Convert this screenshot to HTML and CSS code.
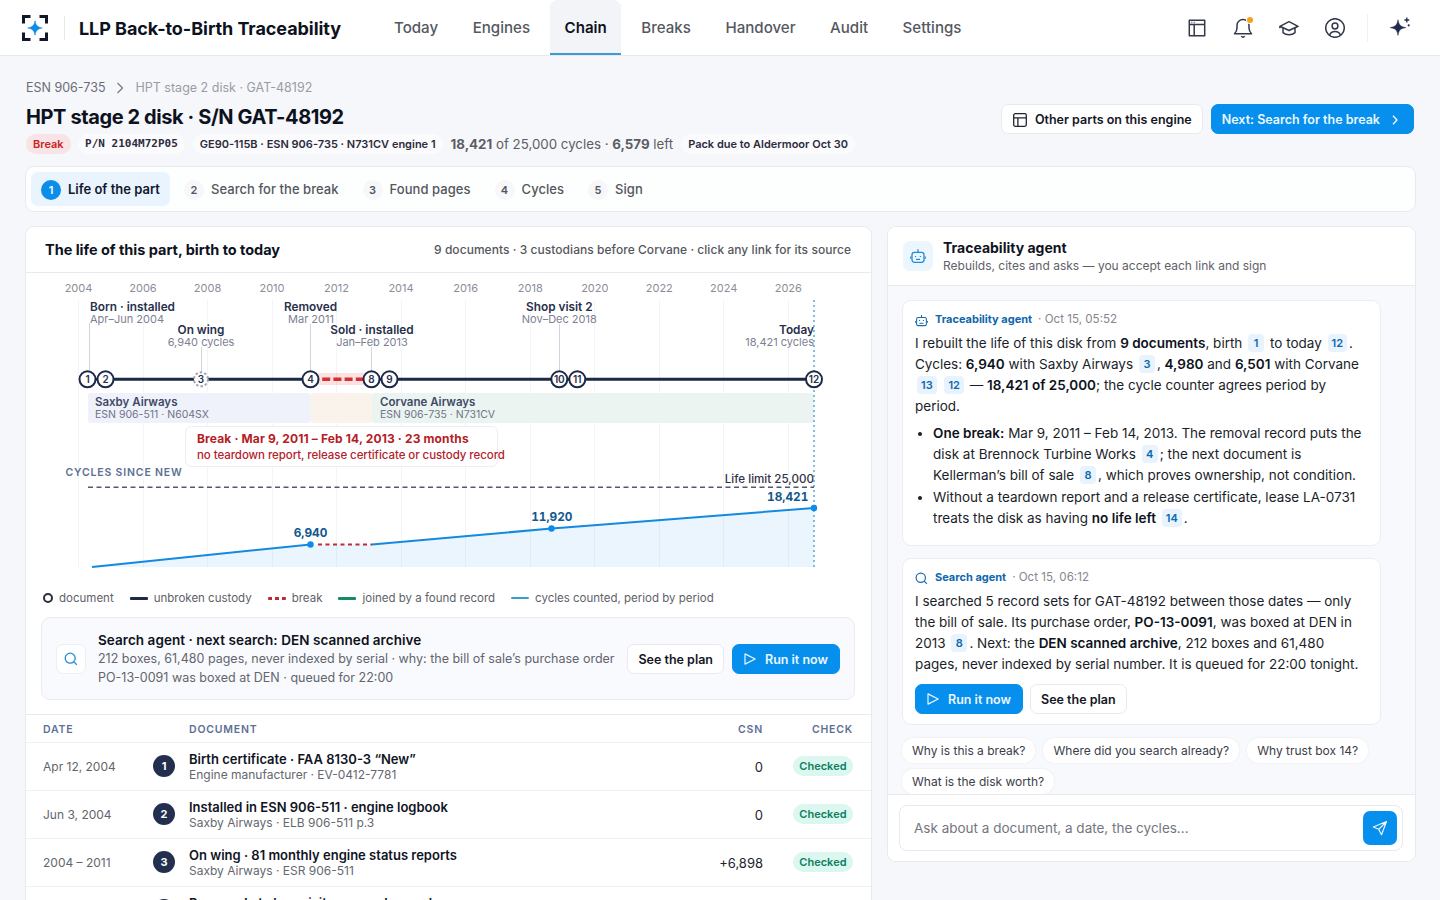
FILE: index.html
```html
<!DOCTYPE html>
<html lang="en">
<head>
<meta charset="utf-8">
<title>LLP Back-to-Birth Traceability</title>
<link rel="stylesheet" href="styles.css">
</head>
<body>
<header class="top">
  <svg class="logo" viewBox="0 0 26 26"><path d="M1.500 8.500v-7h7M17.500 1.500h7v7M24.500 17.500v7h-7M8.500 24.500h-7v-7" fill="none" stroke="#10182c" stroke-width="3" stroke-linejoin="miter"/><path d="M13 5.800c.9 4.800 2.400 6.300 7.200 7.200-4.800.9-6.300 2.400-7.200 7.200-.9-4.800-2.400-6.300-7.200-7.200 4.800-.9 6.300-2.400 7.200-7.200z" fill="#0c8ce9" stroke="#0c8ce9" stroke-width=".6"/></svg>
  <div class="vline"></div>
  <div class="product">LLP Back-to-Birth Traceability</div>
  <nav class="nav">
    <a>Today</a><a>Engines</a><a class="on">Chain</a><a>Breaks</a><a>Handover</a><a>Audit</a><a>Settings</a>
  </nav>
  <div class="tools">
    <svg viewBox="0 0 20 20"><path d="M2.300 2.300h15.400v15.400H2.300zM2.300 6.500h15.400M7.200 6.500v11.200M4.500 4.400h.8M6.800 4.400h.8"/></svg>
    <span class="bell"><svg viewBox="0 0 20 20"><path d="M1.500 15.700c1.600-1.500 2.500-3 2.500-6V7.200a6 5.700 0 0 1 12 0v2.500c0 3 .9 4.500 2.500 6zM8.200 18.300q1.800 1.700 3.600 0"/></svg><i></i></span>
    <svg viewBox="0 0 20 20"><path d="M10 3.700L.900 8.300 10 12.500l9.100-4.200zM4 10v4.600c3 2.700 9 2.700 12 0V10M.900 8.300v2"/></svg>
    <svg viewBox="0 0 20 20"><circle cx="10" cy="10" r="9.300"/><circle cx="10" cy="8" r="2.900"/><path d="M4.600 17.200c1-2.800 3-3.600 5.400-3.600s4.400.8 5.400 3.600"/></svg>
  </div>
  <div class="vline far"></div>
  <svg class="spark" viewBox="0 0 22 22"><path d="M9 3.800c.9 5 2.300 6.900 7.900 7.800C11.300 12.500 9.900 14.400 9 19.400 8.100 14.400 6.700 12.500 1.100 11.600 6.700 10.700 8.100 8.800 9 3.800z" fill="#1f2a4d" stroke="#1f2a4d" stroke-width=".5"/><path d="M17.800 1.600v4.800M15.400 4h4.800" stroke="#1f2a4d" stroke-width="1.300"/><circle cx="19.700" cy="9.300" r="1.100" fill="#1f2a4d"/></svg>
</header>

<main class="page">
  <div class="crumbs"><span>ESN 906-735</span><svg viewBox="0 0 8 12"><path d="M1.500 1l5 5-5 5"/></svg><span class="here">HPT stage 2 disk · GAT-48192</span></div>
  <div class="head">
    <div>
      <h1>HPT stage 2 disk · S/N GAT-48192</h1>
      <div class="meta">
        <span class="tag bad">Break</span><span class="tag mono">P/N 2104M72P05</span><span class="tag esn">GE90-115B · ESN 906-735 · N731CV engine 1</span><span class="life"><b>18,421</b> of 25,000 cycles · <b>6,579</b> left</span><span class="tag due">Pack due to Aldermoor Oct 30</span>
      </div>
    </div>
    <div class="actions">
      <button class="btn parts"><svg viewBox="0 0 14 14"><rect x=".7" y=".7" width="12.600" height="12.600" rx="1.500"/><path d="M.7 4.800h12.600M4.900 4.800v8.500"/></svg>Other parts on this engine</button>
      <button class="btn blue next">Next: Search for the break<svg viewBox="0 0 6 10"><path d="M1 .8L5 5 1 9.200"/></svg></button>
    </div>
  </div>

  <div class="steps">
    <div class="step on"><i>1</i>Life of the part</div><div class="step"><i>2</i>Search for the break</div><div class="step"><i>3</i>Found pages</div><div class="step"><i>4</i>Cycles</div><div class="step"><i>5</i>Sign</div>
  </div>

  <div class="cols">
    <section class="card">
      <div class="cardhead"><h2>The life of this part, birth to today</h2><span>9 documents · 3 custodians before Corvane · click any link for its source</span></div>
      <svg class="chart" viewBox="26 273 845 310">
        <path class="grid" d="M78.500 300V567M143.500 300V567M207.500 300V567M272.500 300V567M336.500 300V567M401.500 300V567M465.500 300V567M530.500 300V567M594.500 300V567M659.500 300V567M723.500 300V567M788.500 300V567"/>
        <g class="years">
          <text x="78.500" y="292">2004</text><text x="143" y="292">2006</text><text x="207.500" y="292">2008</text><text x="272" y="292">2010</text><text x="336.500" y="292">2012</text><text x="401" y="292">2014</text><text x="465.700" y="292">2016</text><text x="530.300" y="292">2018</text><text x="594.800" y="292">2020</text><text x="659.300" y="292">2022</text><text x="723.700" y="292">2024</text><text x="788.300" y="292">2026</text>
        </g>
        <rect x="88" y="393" width="223" height="30" rx="3" fill="#eff2fb"/>
        <rect x="311" y="393" width="61" height="30" rx="3" fill="#f9f3eb"/>
        <rect x="372" y="393" width="442" height="30" rx="3" fill="#ebf4f1"/>
        <path class="stem" d="M89.500 323V371M201.500 347V371M310.500 324V371M371.500 347V371M559.500 324V371"/>
        <g class="lab">
          <text x="90" y="311.300">Born · installed</text>
          <text class="mid" x="201" y="334">On wing</text>
          <text class="mid" x="310.500" y="311.300">Removed</text>
          <text class="mid" x="372" y="334">Sold · installed</text>
          <text class="mid" x="559.300" y="311.300">Shop visit 2</text>
          <text class="end" x="814" y="334">Today</text>
        </g>
        <g class="sub">
          <text x="90" y="323">Apr–Jun 2004</text>
          <text class="mid" x="201" y="345.500">6,940 cycles</text>
          <text class="mid" x="311" y="323">Mar 2011</text>
          <text class="mid" x="372" y="345.500">Jan–Feb 2013</text>
          <text class="mid" x="559.300" y="323">Nov–Dec 2018</text>
          <text class="end" x="814" y="345.500">18,421 cycles</text>
        </g>
        <path d="M92 567L310.500 544.500H372L551.500 528.500L565 527.500L814 508V567Z" fill="#0c8ce9" fill-opacity=".085"/>
        <path d="M88 379.300H310M372 379.300H814" stroke="#1c2947" stroke-width="3"/>
        <rect x="316" y="373" width="50" height="12" rx="4" fill="#e5383b" fill-opacity=".15"/>
        <path d="M314 379.300H370" stroke="#d62f33" stroke-width="3.500" stroke-dasharray="8 3.200" stroke-dashoffset="3"/>
        <path d="M814 300V567" stroke="#58a9dc" stroke-width="1.500" stroke-dasharray="2 3"/>
        <g class="node">
          <circle cx="87.500" cy="379.300" r="8"/><circle cx="105.500" cy="379.300" r="8"/>
          <circle class="soft" cx="201" cy="379.300" r="7"/>
          <circle cx="310.500" cy="379.300" r="8"/><circle cx="371.500" cy="379.300" r="8"/><circle cx="389.500" cy="379.300" r="8"/>
          <circle cx="559.300" cy="379.300" r="8"/><circle cx="577.300" cy="379.300" r="8"/><circle cx="814" cy="379.300" r="8"/>
          <text x="87.500" y="382.700">1</text><text x="105.500" y="382.700">2</text><text x="201" y="382.700">3</text><text x="310.500" y="382.700">4</text><text x="371.500" y="382.700">8</text><text x="389.500" y="382.700">9</text><text x="559.300" y="382.700">10</text><text x="577.300" y="382.700">11</text><text x="814" y="382.700">12</text>
        </g>
        <g class="own"><text x="95" y="406">Saxby Airways</text><text x="380" y="406">Corvane Airways</text></g>
        <g class="ownsub"><text x="95" y="418">ESN 906-511 · N604SX</text><text x="380" y="418">ESN 906-735 · N731CV</text></g>
        <rect x="185.500" y="426.500" width="312" height="40" rx="6" fill="#fff" stroke="#ececf2"/>
        <text class="brk" x="197" y="443.300">Break · Mar 9, 2011 – Feb 14, 2013 · 23 months</text>
        <text class="brk2" x="197" y="458.500">no teardown report, release certificate or custody record</text>
        <text class="cap" x="65.500" y="476">CYCLES SINCE NEW</text>
        <path d="M88 487.200H814" stroke="#55576a" stroke-width="1.500" stroke-dasharray="5 3.500"/>
        <text class="limit" x="814" y="482.500">Life limit 25,000</text>
        <path d="M92 567L310.500 544.500M372 544.500L551.500 528.500L565 527.500L814 508" fill="none" stroke="#1489e0" stroke-width="2"/>
        <path d="M318 544.500H372" stroke="#c02a36" stroke-width="2" stroke-dasharray="4 3.500"/>
        <g fill="#0c8ce9"><circle cx="310.500" cy="544.500" r="3.200"/><circle cx="551.500" cy="528.500" r="3.200"/><circle cx="814" cy="508" r="3.200"/></g>
        <g class="val"><text x="310.500" y="536.700">6,940</text><text x="551.800" y="521.300">11,920</text><text x="787.700" y="500.500">18,421</text></g>
      </svg>
      <div class="legend">
        <span><i class="dot"></i>document</span>
        <span><i class="bar"></i>unbroken custody</span>
        <span><i class="dash"></i>break</span>
        <span><i class="bar green"></i>joined by a found record</span>
        <span><i class="bar cyan"></i>cycles counted, period by period</span>
      </div>
      <div class="search">
        <span class="sq"><svg viewBox="0 0 14 14"><circle cx="6.200" cy="6.200" r="5"/><path d="M9.900 9.900L12.800 12.800"/></svg></span>
        <div class="searchtext"><b>Search agent · next search: DEN scanned archive</b><p>212 boxes, 61,480 pages, never indexed by serial · why: the bill of sale’s purchase order<br>PO-13-0091 was boxed at DEN · queued for 22:00</p></div>
        <button class="btn plan">See the plan</button>
        <button class="btn blue run"><svg viewBox="0 0 12 12"><path d="M1 .9v10.200L11.200 6z"/></svg>Run it now</button>
      </div>
      <div class="table">
        <div class="tr th"><span>DATE</span><span></span><span>DOCUMENT</span><span class="r">CSN</span><span class="r">CHECK</span></div>
        <div class="tr"><span class="date">Apr 12, 2004</span><i>1</i><div class="doc"><b>Birth certificate · FAA 8130-3 “New”</b><small>Engine manufacturer · EV-0412-7781</small></div><span class="r num">0</span><span class="r"><em>Checked</em></span></div>
        <div class="tr"><span class="date">Jun 3, 2004</span><i>2</i><div class="doc"><b>Installed in ESN 906-511 · engine logbook</b><small>Saxby Airways · ELB 906-511 p.3</small></div><span class="r num">0</span><span class="r"><em>Checked</em></span></div>
        <div class="tr"><span class="date">2004 – 2011</span><i>3</i><div class="doc"><b>On wing · 81 monthly engine status reports</b><small>Saxby Airways · ESR 906-511</small></div><span class="r num">+6,898</span><span class="r"><em>Checked</em></span></div>
        <div class="tr"><span class="date">Mar 9, 2011</span><i>4</i><div class="doc"><b>Removed at shop visit · removal record</b><small>Brennock Turbine Works</small></div><span class="r num">6,940</span><span class="r"><em>Checked</em></span></div>
      </div>
    </section>

    <aside class="card agent">
      <div class="agenthead">
        <span class="sq bot"><svg viewBox="0 0 16 16"><rect x="2" y="4.300" width="12" height="10" rx="2.500"/><path d="M8 1.200v3.100M.8 8.500v2.300M15.200 8.500v2.300M5.600 8v.9M10.400 8v.9M6 11.300h4"/></svg></span>
        <div><b>Traceability agent</b><small>Rebuilds, cites and asks — you accept each link and sign</small></div>
      </div>
      <div class="feed">
        <article class="msg first">
          <div class="who"><svg viewBox="0 0 16 16"><rect x="2" y="4.300" width="12" height="10" rx="1.800"/><path d="M8 1.200v3.100M.8 8.500v2.300M15.200 8.500v2.300M5.600 7.500v1M10.400 7.500v1M5.500 11.500h5"/></svg><b>Traceability agent</b><span>· Oct 15, 05:52</span></div>
          <p>I rebuilt the life of this disk from <b>9 documents</b>, birth <sup>1</sup> to today <sup>12</sup>.<br>Cycles: <b>6,940</b> with Saxby Airways <sup>3</sup>, <b>4,980</b> and <b>6,501</b> with Corvane<br><sup>13</sup> <sup>12</sup> — <b>18,421 of 25,000</b>; the cycle counter agrees period by<br>period.</p>
          <ul>
            <li><b>One break:</b> Mar 9, 2011 – Feb 14, 2013. The removal record puts the<br>disk at Brennock Turbine Works <sup>4</sup>; the next document is<br>Kellerman’s bill of sale <sup>8</sup>, which proves ownership, not condition.</li>
            <li>Without a teardown report and a release certificate, lease LA-0731<br>treats the disk as having <b>no life left</b> <sup>14</sup>.</li>
          </ul>
        </article>
        <article class="msg second">
          <div class="who"><svg viewBox="0 0 14 14"><circle cx="6.200" cy="6.200" r="5"/><path d="M9.900 9.900L12.800 12.800"/></svg><b>Search agent</b><span>· Oct 15, 06:12</span></div>
          <p>I searched 5 record sets for GAT-48192 between those dates — only<br>the bill of sale. Its purchase order, <b>PO-13-0091</b>, was boxed at DEN in<br>2013 <sup>8</sup>. Next: the <b>DEN scanned archive</b>, 212 boxes and 61,480<br>pages, never indexed by serial number. It is queued for 22:00 tonight.</p>
          <div class="btns"><button class="btn blue run"><svg viewBox="0 0 12 12"><path d="M1 .9v10.200L11.200 6z"/></svg>Run it now</button><button class="btn plan">See the plan</button></div>
        </article>
        <div class="chips"><span>Why is this a break?</span><span>Where did you search already?</span><span>Why trust box 14?</span><span>What is the disk worth?</span></div>
      </div>
      <div class="ask"><div class="box"><span>Ask about a document, a date, the cycles...</span><button class="send"><svg viewBox="0 0 16 16"><path d="M14.500 1.500L1.300 7l5.400 2.300L9.500 14.700zM14.500 1.500L6.700 9.300"/></svg></button></div></div>
    </aside>
  </div>
</main>
</body>
</html>
```

FILE: styles.css
```css
* { box-sizing: border-box; }
body { margin: 0; width: 1440px; height: 900px; overflow: hidden; background: #f6f7fb; color: #10141f; font: 13px/1.2 Inter, "Liberation Sans", sans-serif; }
svg { display: block; flex: none; fill: none; stroke-linejoin: round; stroke-linecap: butt; }
button { font: inherit; margin: 0; }
h1, h2, p, ul { margin: 0; }
i, em { font-style: normal; }

.top { display: flex; align-items: center; height: 56px; padding: 0 29px 0 22px; background: #fff; border-bottom: 1px solid #e7e9ee; }
.logo { width: 26px; height: 26px; }
.vline { width: 1px; height: 24px; margin-left: 16px; background: #e6e8ee; }
.product { width: 300.5px; margin-left: 14px; padding-top: 2px; font-size: 18px; font-weight: 700; letter-spacing: -.06px; color: #0d1220; white-space: nowrap; }
.nav { display: flex; gap: 5.5px; height: 55px; align-self: flex-start; }
.nav a { display: flex; align-items: center; padding: 1px 14.5px 0; font-size: 15.1px; font-weight: 500; color: #55585f; }
.nav a.on { font-weight: 600; color: #0d1220; background: #f3f4f7; border-radius: 8px 8px 0 0; box-shadow: inset 0 -2px #3d9bd3; }
.tools { display: flex; gap: 26px; margin-left: auto; }
.tools svg { width: 20px; height: 20px; stroke: #33384a; stroke-width: 1.5; }
.bell { position: relative; }
.bell i { position: absolute; top: -1px; right: 0; width: 6px; height: 6px; border-radius: 50%; background: #f5a11c; box-shadow: 0 0 0 1px #fff; }
.vline.far { height: 28px; margin-left: 22px; background: #f0f1f6; }
.spark { width: 22px; height: 22px; margin: -2px 0 0 21px; }

.page { padding: 0 24px 0 25px; }
.crumbs { display: flex; align-items: center; height: 20px; margin-top: 21.5px; padding-left: 1px; font-size: 12.5px; color: #6b6d75; }
.crumbs svg { width: 8px; height: 12px; margin: 0 12px 0 10px; stroke: #777a83; stroke-width: 1.2; }
.crumbs .here { color: #9a9ca5; }
.head { display: flex; justify-content: space-between; height: 68.5px; padding: 0 2px 0 1px; }
h1 { height: 36.5px; font-size: 20px; line-height: 38px; font-weight: 700; letter-spacing: -.4px; color: #0d1220; white-space: nowrap; }
.meta { display: flex; align-items: center; height: 20px; white-space: nowrap; }
.tag { height: 20px; font-size: 11px; line-height: 20px; font-weight: 600; color: #2b2c3c; background: #fbfbfe; border-radius: 10px; padding: 0 7px; }
.tag.bad { color: #c9221f; background: #f8e3e6; }
.tag.mono { margin-left: 7.5px; font-family: "DejaVu Sans Mono", monospace; font-weight: 700; }
.tag.esn { margin-left: 8px; }
.tag.due { margin-left: 8px; }
.life { margin-left: 8px; padding-top: 1px; font-size: 13.3px; color: #5b5d66; }
.life b { font-weight: 700; }
.actions { display: flex; gap: 8px; margin-top: 6.5px; }
.btn { display: flex; align-items: center; height: 30px; padding: 1px 11px 0; border: 1px solid #e9eaf0; border-radius: 7px; background: #fff; color: #14161f; font-size: 12.5px; font-weight: 600; white-space: nowrap; }
.btn.blue { border-color: #068fec; background: #068fec; color: #eaf7ff; }
.parts { padding: 1px 10px 0 11px; }
.parts svg { width: 14px; height: 14px; margin-right: 8px; stroke: #22252f; stroke-width: 1.3; }
.next { padding: 1px 15px 0 10px; }
.next svg { width: 6px; height: 10px; margin-left: 12px; stroke: #fff; stroke-width: 1.3; }
.btn.plan { padding: 1px 10px 0; }

.steps { display: flex; gap: 4px; align-items: center; height: 46px; padding: 0 5px; background: #fdfefe; border: 1px solid #e8eaee; border-radius: 9px; }
.step { display: flex; align-items: center; gap: 7px; height: 34px; padding: 1px 10px 0; border-radius: 7px; font-size: 13px; font-weight: 500; letter-spacing: .05px; color: #54565d; }
.step i { width: 20px; height: 20px; border-radius: 50%; background: #f7f7fa; font-size: 11px; line-height: 20px; font-weight: 600; text-align: center; }
.step.on { background: #eaf4fe; color: #10182c; font-weight: 600; letter-spacing: 0; }
.step.on i { background: #0a8eea; color: #fff; }

.cols { display: grid; grid-template-columns: 847px 529px; gap: 15px; align-items: start; margin-top: 14px; }
.card { background: #fff; border: 1px solid #e8eaf0; border-radius: 9px; overflow: hidden; }
.cardhead { display: flex; justify-content: space-between; align-items: center; height: 46px; padding: 1px 20px 0 19px; border-bottom: 1px solid #e8eaee; }
h2 { font-size: 14.5px; font-weight: 700; letter-spacing: -.02px; color: #0d1220; }
.cardhead span { font-size: 12px; font-weight: 500; letter-spacing: .05px; color: #55575e; }

.chart { width: 845px; height: 310px; }
.grid { stroke: #f3f4f8; }
.years { font-size: 11px; fill: #8b8d98; text-anchor: middle; }
.stem { stroke: #d3d5de; }
.lab { font-size: 11.8px; font-weight: 600; fill: #27304a; }
.sub { font-size: 11px; fill: #7c7f92; }
.mid { text-anchor: middle; }
.end { text-anchor: end; }
.node circle { fill: #fff; stroke: #1c2947; stroke-width: 2; }
.node circle.soft { stroke: #9fa3b0; stroke-dasharray: 2.5 2; }
.node text { font-size: 10px; font-weight: 600; fill: #27304a; text-anchor: middle; }
.own { font-size: 11.5px; font-weight: 600; fill: #3f4a66; }
.ownsub { font-size: 10.5px; fill: #6f7487; }
.brk { font-size: 12px; font-weight: 700; letter-spacing: .14px; fill: #b51c26; }
.brk2 { font-size: 11.5px; font-weight: 500; letter-spacing: -.07px; fill: #b3222c; }
.cap { font-size: 10.5px; font-weight: 600; letter-spacing: .83px; fill: #5d7095; }
.limit { font-size: 11.6px; font-weight: 500; fill: #2f3247; text-anchor: end; }
.val { font-size: 11.8px; font-weight: 700; font-variant-numeric: tabular-nums; fill: #13588f; text-anchor: middle; }

.legend { display: flex; align-items: center; gap: 16px; height: 30px; padding: 1px 0 0 17px; font-size: 11.5px; color: #5f6169; }
.legend span { display: flex; align-items: center; gap: 6px; }
.legend i { width: 18px; height: 3px; border-radius: 1px; background: #1c2947; }
.legend .dot { width: 10px; height: 10px; border: 2px solid #2b2e3c; border-radius: 50%; background: none; }
.legend .dash { background: repeating-linear-gradient(90deg, #c02a36 0 4px, transparent 4px 7px); }
.legend .green { background: #178a68; }
.legend .cyan { height: 2px; background: #3a9cc9; }

.search { display: flex; align-items: center; height: 83px; margin: 4px 16px 0 15px; padding: 0 14px; background: #f9fafd; border: 1px solid #eaebf1; border-radius: 9px; }
.sq { display: flex; align-items: center; justify-content: center; width: 30px; height: 30px; border: 1px solid #edeff4; border-radius: 7px; background: #fff; }
.sq svg { width: 14px; height: 14px; stroke: #1d8ddd; stroke-width: 1.3; }
.searchtext { flex: 1; margin-left: 12px; line-height: 19px; white-space: nowrap; }
.searchtext b { font-size: 13.5px; font-weight: 600; letter-spacing: .05px; color: #0d1220; }
.searchtext p { margin-top: -1px; font-size: 12.5px; color: #63656d; }
.run svg { width: 12px; height: 12px; margin-right: 9px; stroke: #eaf7ff; stroke-width: 1.2; }
.search .run { margin-left: 8px; }

.table { margin-top: 14px; border-top: 1px solid #e8eaee; }
.tr { display: grid; grid-template-columns: 110px 36px 1fr 80px 90px; align-items: center; height: 48px; padding: 0 18px 0 17px; border-bottom: 1px solid #f0f1f4; }
.tr.th { height: 28px; padding-top: 3px; font-size: 10.5px; font-weight: 600; letter-spacing: .8px; color: #5d7095; }
.r { text-align: right; }
.tr i { width: 22px; height: 22px; margin-top: -1px; border-radius: 50%; background: #232f4e; color: #fff; font-size: 11px; line-height: 22px; font-weight: 700; text-align: center; }
.date { padding-top: 2px; font-size: 12px; color: #63656d; }
.num { padding-top: 2px; font-size: 13px; color: #22242c; }
.doc b, .doc small { display: block; line-height: 16px; }
.doc b { font-size: 13px; font-weight: 600; color: #10141f; }
.doc small { font-size: 12px; color: #65676f; }
.tr em { display: inline-block; height: 20px; margin-top: -2px; padding: 0 6.5px; border-radius: 10px; background: #dcf7ef; color: #0b7f5c; font-size: 11px; line-height: 20px; font-weight: 600; }

.agent { height: 636px; display: flex; flex-direction: column; background: #f8f9fc; }
.agenthead { display: flex; align-items: center; gap: 10px; height: 59px; padding: 1px 15px 0; background: #fff; border-bottom: 1px solid #e8eaee; }
.bot { margin-top: -1px; background: #edf5fd; border-color: #edf5fd; }
.bot svg { width: 16px; height: 16px; }
.agenthead b, .agenthead small { display: block; line-height: 18px; }
.agenthead b { font-size: 14px; font-weight: 700; }
.agenthead small { font-size: 12px; color: #5f6169; }
.feed { flex: 1; min-height: 0; padding: 14px 14px 0; overflow: hidden; }
.msg { width: 479px; padding: 9px 12px; background: #fff; border: 1px solid #ecedf3; border-radius: 9px; }
.msg.first { height: 246px; }
.msg.second { height: 167px; margin-top: 12px; }
.who { display: flex; align-items: center; height: 20px; font-size: 11.6px; }
.who svg { width: 13px; height: 13px; margin-right: 7px; stroke: #1b6cae; stroke-width: 1.3; }
.who b { font-size: 11px; font-weight: 700; color: #0e66ac; margin-right: 6px; }
.who span { color: #85878f; }
.msg p, .msg li { font-size: 13.5px; line-height: 21.1px; color: #1a1e29; white-space: nowrap; }
.msg p { padding-top: 3px; }
.msg p b, .msg li b { font-weight: 600; color: #0d1220; }
.msg ul { margin-top: 5.5px; padding-left: 18px; }
.msg li + li { margin-top: 1px; }
.msg sup { display: inline-block; min-width: 16px; height: 18px; margin: 0 2px; padding: 0 4px; border-radius: 4px; background: #e8f3fd; color: #0d68ae; font-size: 11px; line-height: 18px; font-weight: 600; text-align: center; vertical-align: 1px; }
.btns { display: flex; gap: 7px; margin-top: 8.5px; }
.chips { display: flex; flex-wrap: wrap; gap: 6px 8px; margin-top: 13px; }
.chips span { height: 25px; padding: 0 10px; border-radius: 12px; background: #fff; box-shadow: 0 0 1px 1px #f1f2f7; font-size: 12px; line-height: 25px; color: #3b3d49; }
.ask { height: 67px; padding: 10px 12px 0 11px; background: #fff; border-top: 1px solid #e8eaf0; }
.box { display: flex; align-items: center; justify-content: space-between; height: 46px; padding: 0 5px 0 14px; border: 1px solid #e9eaf0; border-radius: 8px; font-size: 13.5px; color: #74767e; }
.send { display: flex; align-items: center; justify-content: center; width: 34px; height: 34px; padding: 0; border: 0; border-radius: 7px; background: #068fec; }
.send svg { width: 16px; height: 16px; stroke: #eaf7ff; stroke-width: 1.2; }
```
